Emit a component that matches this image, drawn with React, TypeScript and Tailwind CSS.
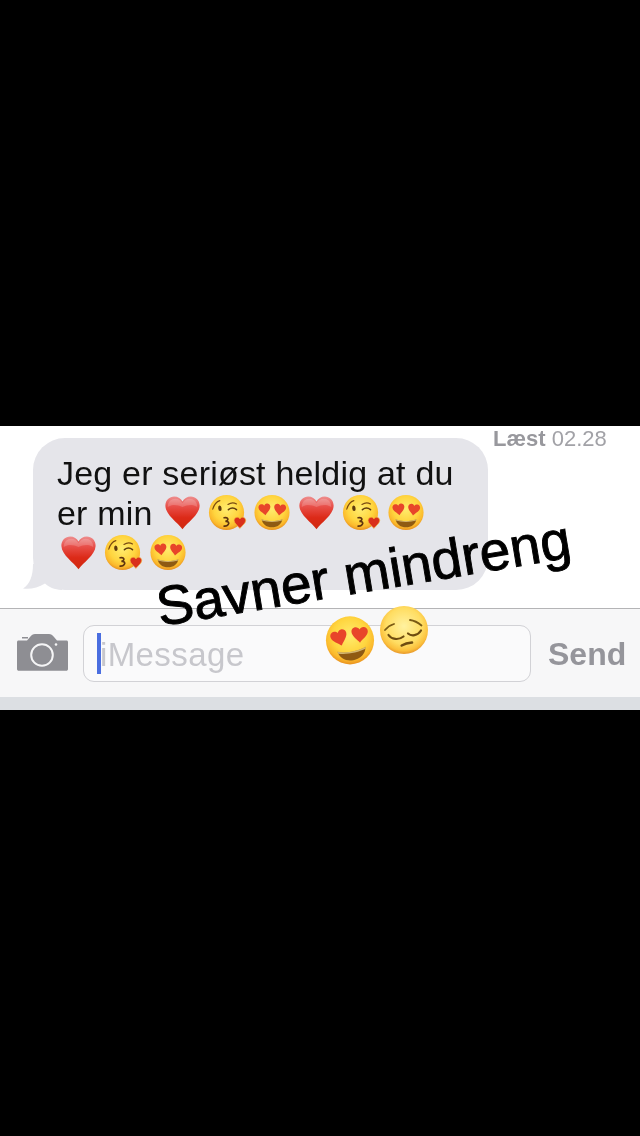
const font = "font-['Liberation_Sans',Arial,sans-serif]";

function EmojiDefs() {
  return (
    <svg className="absolute h-0 w-0">
      <defs>
        <linearGradient id="heartFill" x1="0" y1="0" x2="0" y2="1">
          <stop offset="0" stopColor="#ee8f8f" />
          <stop offset="0.3" stopColor="#e8504a" />
          <stop offset="0.65" stopColor="#dc2a18" />
          <stop offset="1" stopColor="#cf2a10" />
        </linearGradient>
        <radialGradient id="faceFill" cx="0.5" cy="0.4" r="0.6">
          <stop offset="0" stopColor="#ffec6e" />
          <stop offset="0.6" stopColor="#ffd53f" />
          <stop offset="0.85" stopColor="#fbb92c" />
          <stop offset="1" stopColor="#e8901e" />
        </radialGradient>
        <radialGradient id="paleFill" cx="0.5" cy="0.42" r="0.58">
          <stop offset="0" stopColor="#fff2a0" />
          <stop offset="0.65" stopColor="#ffdd62" />
          <stop offset="0.88" stopColor="#fbc03c" />
          <stop offset="1" stopColor="#e8982a" />
        </radialGradient>
      </defs>
    </svg>
  );
}

const heartPath =
  "M20 37C15 30 2 22 1.500 12 1.200 5.500 6 1.500 11 1.500c4 0 7.500 2.200 9 5.500 1.500-3.300 5-5.500 9-5.500 5 0 9.800 4 9.500 10.500C38 22 25 30 20 37z";

function Heart({ className = "h-[37px] w-[37px]" }: { className?: string }) {
  return (
    <svg viewBox="0 0 40 40" className={className}>
      <path d={heartPath} fill="url(#heartFill)" />
      <path
        d="M4 13C4 7 8 4 12 4c3.500 0 6.500 2 8 5 1.500-3 4.500-5 8-5 4 0 8 3 8 9-5-3.500-11-2.500-16 0-5-2.500-11-3.500-16 0z"
        fill="#fff"
        opacity="0.18"
      />
    </svg>
  );
}

function KissFace() {
  return (
    <svg viewBox="0 0 40 40" className="h-[38px] w-[38px] overflow-visible">
      <circle cx="19.500" cy="19.500" r="18.500" fill="url(#faceFill)" />
      <path d="M5 16C6.500 11 9 8 12.500 7" fill="none" stroke="#7a4a12" strokeWidth="1.200" strokeLinecap="round" />
      <ellipse cx="12.500" cy="15" rx="1.800" ry="3" fill="#5f3a0e" transform="rotate(-8 12.500 15)" />
      <path d="M21 11C24 9 27.500 9 30 10.500" fill="none" stroke="#7a4a12" strokeWidth="1.200" strokeLinecap="round" />
      <path d="M21.500 16.500C24 14.500 27.500 14.500 30 16.500" fill="none" stroke="#5f3a0e" strokeWidth="1.600" strokeLinecap="round" />
      <path
        d="M17 25c3-.8 4.800.8 3.500 2.600-.6.800-1.300 1-2.200 1.200 3.200-.3 4.300 1.600 3 3.300-.9 1.300-2.600 1.900-4.300 1.700"
        fill="none"
        stroke="#5f3410"
        strokeWidth="1.800"
        strokeLinecap="round"
      />
      <g transform="translate(27 24) scale(0.33)">
        <path d={heartPath} fill="#d9301c" stroke="#f7b93c" strokeWidth="2" />
      </g>
    </svg>
  );
}

function HeartEyes({ className = "h-[38px] w-[38px]", tilt = 0 }: { className?: string; tilt?: number }) {
  return (
    <svg viewBox="0 0 40 40" className={className}>
      <circle cx="20" cy="19.500" r="18.500" fill="url(#faceFill)" />
      <g transform={`rotate(${tilt} 20 20)`}>
        <g transform="translate(5.500 10) rotate(-8 6 6) scale(0.34)">
          <path d={heartPath} fill="#e8452a" />
        </g>
        <g transform="translate(21.500 10) rotate(8 6 6) scale(0.34)">
          <path d={heartPath} fill="#e8452a" />
        </g>
        <path d="M9 26.500C15 29 25 29 31 26.500 30 32 25.500 35 20 35S10 32 9 26.500z" fill="#8f5a12" />
        <path d="M9 26.500C15 29 25 29 31 26.500l-.4 1.500C25 30 15 30 9.400 28z" fill="#fff3b0" opacity="0.6" />
      </g>
    </svg>
  );
}

function Pensive() {
  return (
    <svg viewBox="0 0 50 50" className="h-[50px] w-[50px]">
      <circle cx="25" cy="25" r="24" fill="url(#paleFill)" />
      <path d="M6 25C8.500 22 11.500 20 15 19" fill="none" stroke="#7a5a14" strokeWidth="1.800" strokeLinecap="round" />
      <path d="M31 15C35 15.500 39 17.500 42.500 20.500" fill="none" stroke="#7a5a14" strokeWidth="1.800" strokeLinecap="round" />
      <path d="M9.500 30C12.500 34.500 19.500 35.500 24.500 31.500" fill="none" stroke="#6e4c10" strokeWidth="2.200" strokeLinecap="round" />
      <path d="M29 28.500C32.500 31.500 38.500 31 42 25.500" fill="none" stroke="#6e4c10" strokeWidth="2.200" strokeLinecap="round" />
      <path d="M22.700 40.500C25.500 38.800 29 37.800 33 37.500" fill="none" stroke="#6e4c10" strokeWidth="2.600" strokeLinecap="round" />
    </svg>
  );
}

function Camera() {
  return (
    <svg viewBox="0 0 51 38" className="h-[38px] w-[51px]">
      <path
        d="M1.500 6.500H10l3-3.500C14.500 1 16 0 18 0h14c2 0 3.500 1 5 3l3 3.500h9.500c.9 0 1.500.7 1.500 1.500v27c0 1-.7 1.800-1.800 1.800H1.800C.8 36.800 0 36 0 35V8c0-.8.7-1.500 1.500-1.500z"
        fill="#8e8e93"
      />
      <rect x="5" y="3" width="6" height="1.500" fill="#8e8e93" />
      <circle cx="25" cy="21" r="10.800" fill="none" stroke="#f5f5f6" strokeWidth="2" />
      <circle cx="39" cy="10.500" r="1.300" fill="#f5f5f6" />
    </svg>
  );
}

export default function App() {
  return (
    <div className={`relative flex h-[1136px] flex-col overflow-hidden bg-black blur-[0.4px] ${font}`}>
      <EmojiDefs />
      <div className="mt-[426px] flex h-[182px] items-start bg-white pl-[33px]">
        <div className="relative mt-[12px] h-[152px] w-[455px] rounded-[32px] bg-[#e5e5ea] pl-[24px] pt-[15px] text-[34px] leading-[40px] tracking-[0.2px] text-[#111]">
          <div>Jeg er seriøst heldig at du</div>
          <div className="flex items-center gap-[7px]">
            <span className="w-[100px]">er min</span>
            <Heart />
            <KissFace />
            <HeartEyes />
            <Heart />
            <KissFace />
            <HeartEyes />
          </div>
          <div className="mt-[1px] flex items-center gap-[7px] pl-[3px]">
            <Heart />
            <KissFace />
            <HeartEyes />
          </div>
          <svg viewBox="0 0 40 26" className="absolute bottom-0 left-[-11px] h-[26px] w-[40px]">
            <path d="M11 0C11 12 8 20 1 24.500 8 25.500 16 24 23 19.500 27 23 32 25.500 40 26V0z" fill="#e5e5ea" />
          </svg>
        </div>
        <div className="ml-[5px] mt-[1px] text-[22px] font-normal leading-[24px] text-[#a2a2a7]">
          <span className="font-bold text-[#98989d]">Læst</span> 02.28
        </div>
      </div>

      <div className="flex h-[89px] items-center border-t border-[#b4b4b6] bg-[#f7f7f8] pl-[17px] pr-[13px]">
        <Camera />
        <div className="ml-[15px] flex h-[57px] w-[448px] items-center rounded-[11px] border border-[#d2d2d6] bg-[#fafafb] pl-[13px] text-[33px] tracking-[0.4px] text-[#c7c7cc]">
          <span className="h-[41px] w-[4px] bg-[#4a6ee0]" />
          <span className="ml-[-1px] mt-[3px]">iMessage</span>
        </div>
        <span className="ml-[17px] mt-[2px] text-[32px] font-bold leading-none text-[#95959b]">Send</span>
      </div>
      <div className="h-[13px] bg-[#dcdfe3]" />

      <div className="absolute left-[154px] top-[543px] origin-center -rotate-[9.5deg] whitespace-nowrap text-[55px] leading-[60px] text-black [-webkit-text-stroke:0.9px_black]">
        Savner mindreng
      </div>
      <div className="absolute left-[324px] top-[615px]">
        <HeartEyes className="h-[52px] w-[52px]" tilt={-10} />
      </div>
      <div className="absolute left-[379px] top-[605px]">
        <Pensive />
      </div>
    </div>
  );
}
